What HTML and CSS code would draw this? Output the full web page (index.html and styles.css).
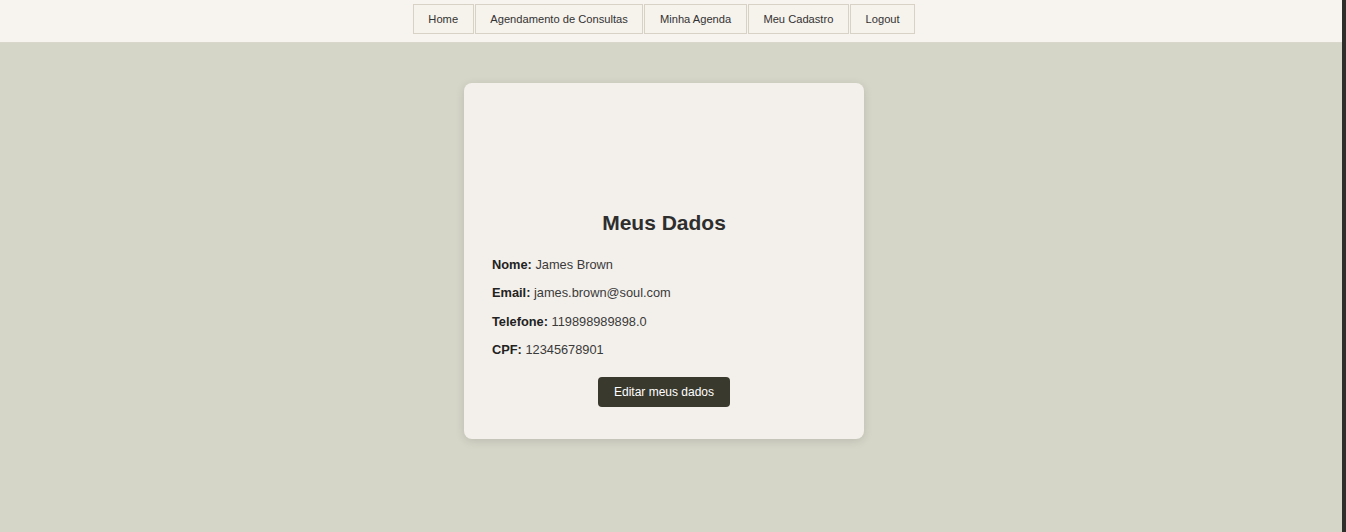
FILE: index.html
```html
<!DOCTYPE html>
<html lang="pt-BR">
<head>
<meta charset="utf-8">
<title>Meu Cadastro</title>
<link rel="stylesheet" href="styles.css">
</head>
<body>
<div class="app">
  <div class="page">
    <header class="topbar">
      <nav class="nav">
        <a class="nav-btn" href="#">Home</a>
        <a class="nav-btn" href="#">Agendamento de Consultas</a>
        <a class="nav-btn" href="#">Minha Agenda</a>
        <a class="nav-btn" href="#">Meu Cadastro</a>
        <a class="nav-btn" href="#">Logout</a>
      </nav>
    </header>
    <main class="main">
      <section class="card">
        <div class="card-media"></div>
        <h1 class="card-title">Meus Dados</h1>
        <div class="fields">
          <p class="field"><strong>Nome:</strong> James Brown</p>
          <p class="field"><strong>Email:</strong> james.brown@soul.com</p>
          <p class="field"><strong>Telefone:</strong> 119898989898.0</p>
          <p class="field"><strong>CPF:</strong> 12345678901</p>
        </div>
        <div class="actions">
          <button class="btn-edit" type="button">Editar meus dados</button>
        </div>
      </section>
    </main>
  </div>
  <div class="edge"></div>
</div>
</body>
</html>
```

FILE: styles.css
```css
* { box-sizing: border-box; }
html, body { margin: 0; height: 100%; }
body {
  font-family: "Liberation Sans", Arial, sans-serif;
  color: #333;
  background: #d5d6c8;
}
.app {
  display: flex;
  height: 532px;
  overflow: hidden;
}
.page {
  flex: 1;
  display: flex;
  flex-direction: column;
  padding-right: 14px;
  background: #d5d6c8;
}
.edge {
  width: 4px;
  background: #2e2e2b;
}
.topbar {
  height: 43px;
  margin-right: -14px;
  padding: 4px 14px 0 0;
  background: #f7f3ee;
  border-bottom: 1px solid #d9d6cb;
}
.nav {
  display: flex;
  justify-content: center;
  gap: 1.2px;
}
.nav-btn {
  display: flex;
  align-items: center;
  height: 30px;
  padding: 0 14.5px;
  border: 1px solid #d8d1c5;
  background: #f6f2ec;
  color: #333;
  font-size: 11.15px;
  text-decoration: none;
}
.main {
  display: flex;
  justify-content: center;
  padding-top: 40px;
}
.card {
  width: 400px;
  padding: 28px 28px 32px;
  background: #f3f0eb;
  border-radius: 8px;
  box-shadow: 0 2px 10px rgba(0, 0, 0, 0.12);
}
.card-media {
  height: 100px;
}
.card-title {
  margin: 0;
  font-size: 21px;
  line-height: 24px;
  font-weight: bold;
  text-align: center;
  color: #2e2e2e;
}
.fields {
  display: flex;
  flex-direction: column;
  gap: 12.3px;
  margin-top: 22px;
}
.field {
  margin: 0;
  font-size: 12.8px;
  line-height: 16px;
  color: #3a3a3a;
}
.field strong { color: #222; }
.actions {
  display: flex;
  justify-content: center;
  margin-top: 19px;
}
.btn-edit {
  height: 30px;
  padding: 0 16px;
  border: none;
  border-radius: 4px;
  background: #3a392d;
  color: #fff;
  font-family: "Liberation Sans", Arial, sans-serif;
  font-size: 12px;
}
```
